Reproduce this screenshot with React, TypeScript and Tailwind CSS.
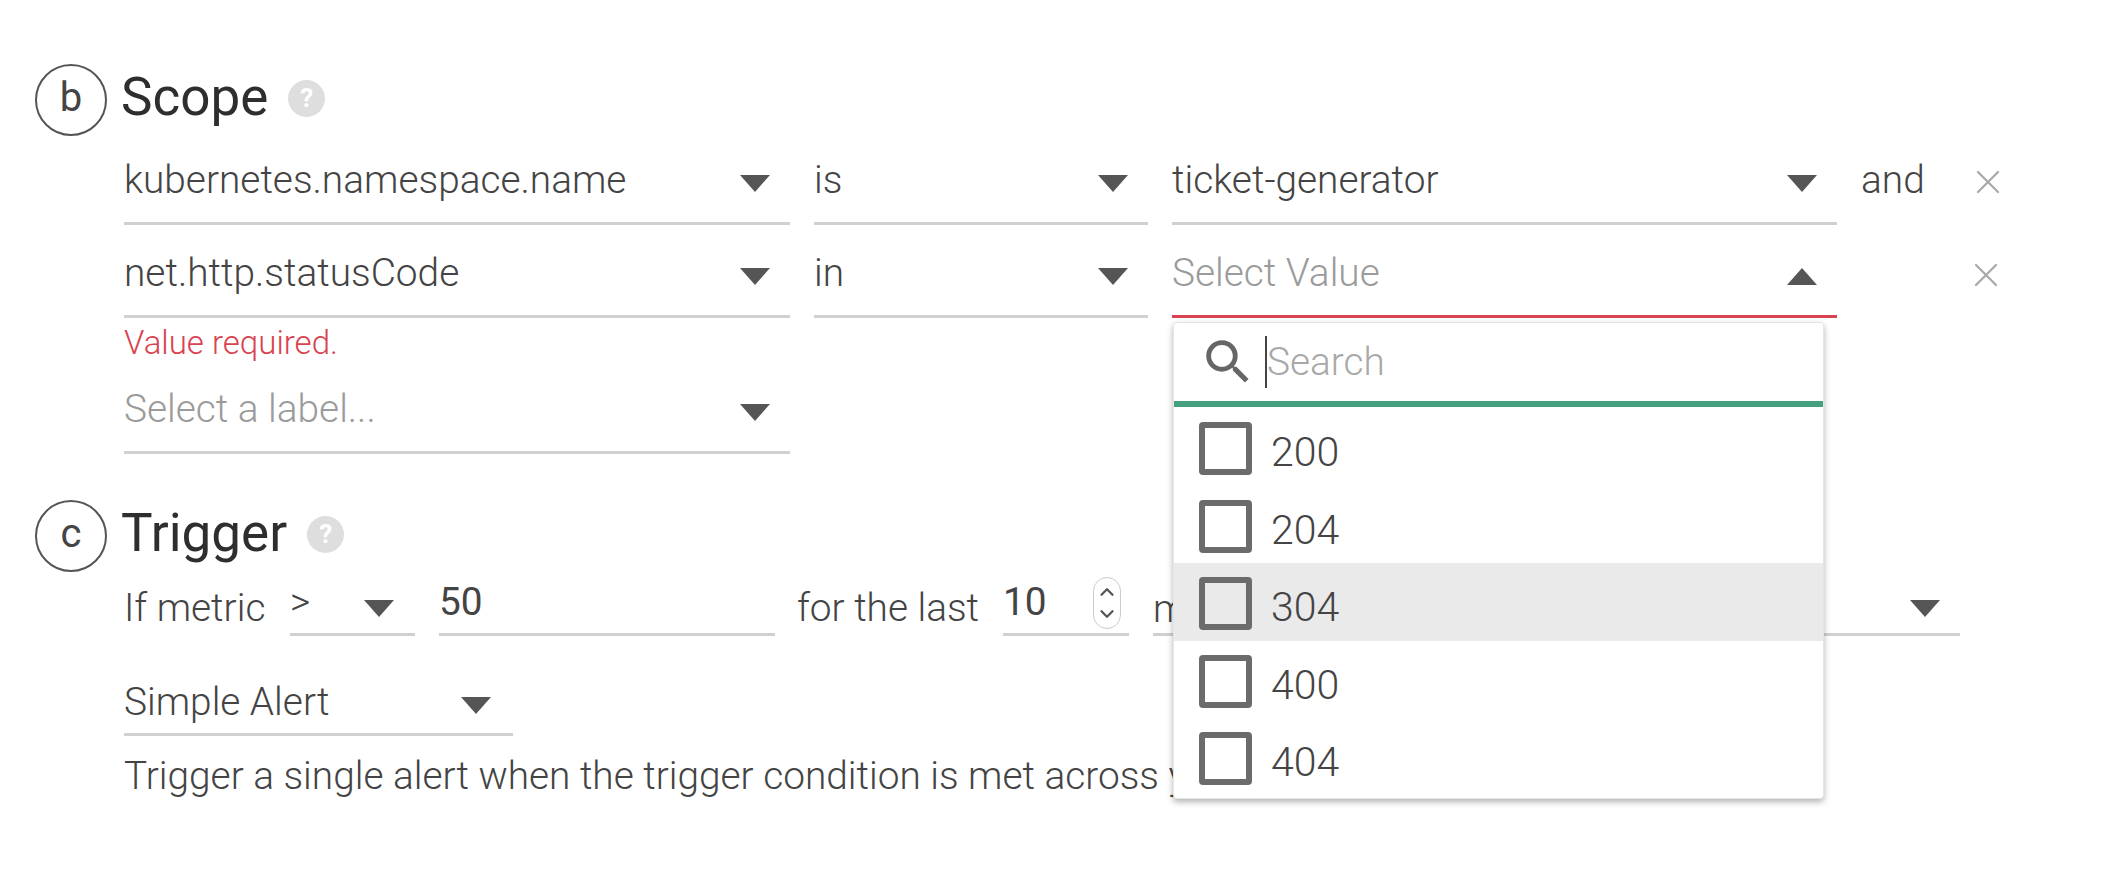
import { X, ChevronUp, ChevronDown } from "lucide-react";

const Caret = ({ up }: { up?: boolean }) => (
  <svg viewBox="0 0 30 17" className="w-[30px] h-[17px] shrink-0 fill-[#555]">
    {up ? <path d="M15 0 L30 17 H0 Z" /> : <path d="M0 0 H30 L15 17 Z" />}
  </svg>
);

const SearchIcon = () => (
  <svg viewBox="0 0 24 24" className="w-[58px] h-[58px] shrink-0 fill-[#666]">
    <path d="M15.5 14h-.79l-.28-.27A6.471 6.471 0 0 0 16 9.5 6.5 6.5 0 1 0 9.5 16c1.61 0 3.09-.59 4.23-1.57l.27.28v.79l5 4.99L20.49 19l-4.99-5zm-6 0C7.01 14 5 11.99 5 9.5S7.01 5 9.5 5 14 7.01 14 9.5 11.99 14 9.5 14z" />
  </svg>
);

function Select({ text, width, placeholder, error, open, pr = "pr-[20px]" }: { text: string; width: string; placeholder?: boolean; error?: boolean; open?: boolean; pr?: string }) {
  return (
    <div className={`${width} h-[72px] shrink-0 flex items-center justify-between pb-[8px] ${pr} border-b-[3px] ${error ? "border-[#d9434f]" : "border-[#d0d0d0]"}`}>
      <span className={`mb-[8px] ${placeholder ? "text-[#9b9b9b]" : ""}`}>{text}</span>
      <Caret up={open} />
    </div>
  );
}

function Heading({ letter, title }: { letter: string; title: string }) {
  return (
    <div className="flex items-center h-[70px]">
      <div className="w-[72px] h-[72px] rounded-full border-2 border-[#555] flex items-center justify-center text-[40px] font-normal text-[#444] leading-none pb-1 shrink-0">
        {letter}
      </div>
      <h2 className="ml-[14px] mb-[6px] text-[53px] font-normal text-[#2e2e2e] leading-none">{title}</h2>
      <div className="ml-[20px] -mt-[3px] w-[37px] h-[37px] rounded-full bg-[#dedede] text-white text-[26px] font-bold flex items-center justify-center">?</div>
    </div>
  );
}

const OPTIONS = ["200", "204", "304", "400", "404"];

export default function App() {
  return (
    <div className="relative w-[2112px] h-[896px] bg-white text-[#444] text-[38.8px] font-light font-['Roboto',sans-serif] pt-[65px] pl-[35px] overflow-hidden">
      <Heading letter="b" title="Scope" />

      <div className="ml-[89px]">
        <div className="flex items-center mt-[16px]">
          <Select text="kubernetes.namespace.name" width="w-[666px]" />
          <div className="w-[24px]" />
          <Select text="is" width="w-[334px]" />
          <div className="w-[24px]" />
          <Select text="ticket-generator" width="w-[665px]" />
          <span className="ml-[24px] mb-[18px]">and</span>
          <X className="ml-[43px] mb-[14px] w-[40px] h-[40px] text-[#aaa]" strokeWidth={1.4} />
        </div>
        <div className="flex items-center mt-[19px]">
          <Select text="net.http.statusCode" width="w-[666px]" />
          <div className="w-[24px]" />
          <Select text="in" width="w-[334px]" />
          <div className="w-[24px]" />
          <Select text="Select Value" width="w-[665px]" placeholder error open />
          <X className="ml-[129px] mb-[14px] w-[40px] h-[40px] text-[#aaa]" strokeWidth={1.4} />
        </div>
        <p className="text-[33px] text-[#d9434f] leading-[50px]">Value required.</p>
        <Select text="Select a label..." width="w-[666px] mt-[14px]" placeholder />
      </div>

      <div className="mt-[47px]">
        <Heading letter="c" title="Trigger" />
      </div>

      <div className="ml-[89px]">
        <div className="flex items-end h-[62px] mt-[3px]">
          <span className="-mb-[1px] w-[166px] shrink-0">If metric</span>
          <div className="w-[125px] h-[62px] shrink-0 flex items-center justify-between pt-[10px] pr-[21px] border-b-[3px] border-[#d0d0d0]">
            <span className="text-[39px] -mt-[12px]">&gt;</span>
            <Caret />
          </div>
          <div className="ml-[24px] w-[336px] h-[62px] shrink-0 flex items-center pt-[10px] border-b-[3px] border-[#d0d0d0] font-normal">
            <span className="-mt-[14px]">50</span>
          </div>
          <span className="ml-[22px] -mb-[1px] w-[206px] shrink-0">for the last</span>
          <div className="w-[126px] h-[62px] shrink-0 flex items-center justify-between pt-[10px] border-b-[3px] border-[#d0d0d0] font-normal pr-[8px]">
            <span className="-mt-[14px]">10</span>
            <div className="flex flex-col items-center border border-[#ccc] rounded-full w-[28px] h-[52px] justify-center -mt-[12px] text-[#555]">
              <ChevronUp className="w-[22px] h-[22px]" strokeWidth={2.5} />
              <ChevronDown className="w-[22px] h-[22px]" strokeWidth={2.5} />
            </div>
          </div>
          <div className="ml-[24px] w-[807px] h-[62px] shrink-0 flex items-center justify-between pt-[10px] pr-[20px] border-b-[3px] border-[#d0d0d0]">
            <span>minutes</span>
            <Caret />
          </div>
        </div>

        <div className="mt-[38px] w-[389px] h-[62px] flex items-center justify-between pt-[4px] pr-[22px] border-b-[3px] border-[#d0d0d0]">
          <span className="mb-[8px]">Simple Alert</span>
          <Caret />
        </div>
        <p className="mt-[11px] whitespace-nowrap">Trigger a single alert when the trigger condition is met across your scope</p>
      </div>

      {/* open dropdown over the form */}
      <div className="absolute left-[1173px] top-[322px] w-[651px] h-[477px] bg-white rounded-[4px] border border-[#e4e6e6] shadow-[0_3px_6px_rgba(0,0,0,0.3)] overflow-hidden">
        <div className="h-[84px] flex items-center pl-[25px] border-b-[6px] border-[#45a07d]">
          <SearchIcon />
          <div className="ml-[8px] w-[2px] h-[52px] bg-[#444]" />
          <span className="text-[#a8a8a8]">Search</span>
        </div>
        <div className="pt-[1px]">
          {OPTIONS.map(o => (
            <div key={o} className={`h-[77.5px] flex items-center pl-[25px] ${o === "304" ? "bg-[#eaeaea]" : ""}`}>
              <div className="w-[53px] h-[53px] mt-[4px] rounded-[4px] border-[6px] border-[#6b6b6b] shrink-0" />
              <span className="ml-[19px] mt-[12px] text-[41px]">{o}</span>
            </div>
          ))}
        </div>
      </div>
    </div>
  );
}
